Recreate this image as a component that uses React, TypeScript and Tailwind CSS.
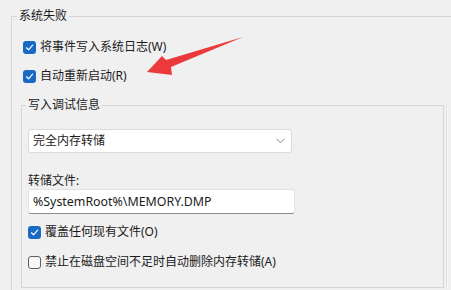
import React from 'react';

const font = { fontFamily: '"Noto Sans", "Noto Sans CJK SC", sans-serif' };

const Box: React.FC<{ checked: boolean }> = ({ checked }) =>
    checked ? (
        <span className="flex h-[13px] w-[13px] shrink-0 items-center justify-center rounded-[3px] bg-[#1a6ac4]">
            <svg width="9" height="9" viewBox="0 0 9 9" fill="none">
                <path d="M1.5 4.8 L3.6 6.8 L7.6 2.2" stroke="#fff" strokeWidth="1.2" strokeLinecap="round" strokeLinejoin="round" />
            </svg>
        </span>
    ) : (
        <span className="h-[13px] w-[13px] shrink-0 rounded-[3px] border border-[#5f5f5f] bg-[#f7f7f7]" />
    );

const Check: React.FC<{ checked: boolean; label: string; className?: string }> = ({ checked, label, className }) => (
    <div className={`flex h-[20px] items-center gap-[4px] ${className ?? ''}`}>
        <Box checked={checked} />
        <span className="text-[12px] leading-[16px] text-[#1b1b1b]">{label}</span>
    </div>
);

export default function App() {
    return (
        <div className="relative h-[290px] w-[451px] overflow-hidden bg-[#f0f0f0]" style={font}>
            <div className="pl-[11px] pt-[8px]">
                {/* 系统失败 */}
                <fieldset className="h-[300px] w-[480px] border border-[#d6d6d6] p-0">
                    <legend className="ml-[5px] px-[2px] text-[12px] leading-[16px] text-[#1b1b1b]">系统失败</legend>
                    <div className="pl-[11px]">
                        <Check checked label="将事件写入系统日志(W)" className="mt-[13px]" />
                        <Check checked label="自动重新启动(R)" className="mt-[9px]" />
                    </div>

                    <div className="flex items-start">
                        {/* 写入调试信息 */}
                        <fieldset className="ml-[9px] mt-[11px] h-[191px] w-[423px] border border-[#d6d6d6] p-0">
                            <legend className="ml-[4px] px-[2px] text-[12px] leading-[16px] text-[#1b1b1b]">写入调试信息</legend>
                            <div className="pl-[6px]">
                                <div className="mt-[16px] flex h-[24px] w-[264px] items-center justify-between rounded-[3px] border border-[#dadada] bg-white pl-[4px] pr-[6px]">
                                    <span className="text-[12px] leading-[16px] text-[#1b1b1b]">完全内存转储</span>
                                    <svg width="9" height="6" viewBox="0 0 9 6" fill="none">
                                        <path d="M0.5 0.8 L4.5 4.8 L8.5 0.8" stroke="#8a8a8a" strokeWidth="1" />
                                    </svg>
                                </div>
                                <div className="mt-[20px] text-[12px] leading-[16px] text-[#1b1b1b]">转储文件:</div>
                                <div className="flex h-[25px] w-[267px] items-center rounded-[3px] border border-[#e3e3e3] border-b-[#8d8d8d] bg-white pl-[4px]">
                                    <span className="text-[12.4px] leading-[16px] text-[#1b1b1b]">%SystemRoot%\MEMORY.DMP</span>
                                </div>
                                <Check checked label="覆盖任何现有文件(O)" className="mt-[8px]" />
                                <Check checked={false} label="禁止在磁盘空间不足时自动删除内存转储(A)" className="mt-[10px]" />
                            </div>
                        </fieldset>
                        {/* faint edge to the right of the inner group */}
                        <div className="ml-[2px] mt-[18px] h-[185px] w-[2px] border-l border-[#e2e2e2] bg-[#f7f7f7]" />
                    </div>
                </fieldset>
            </div>

            {/* red arrow annotation */}
            <svg className="absolute left-0 top-0" width="451" height="290" viewBox="0 0 451 290">
                <polygon points="147,72 162,56 166,60 243,37 171,67 172,75" fill="#ec3a3c" />
            </svg>
        </div>
    );
}
